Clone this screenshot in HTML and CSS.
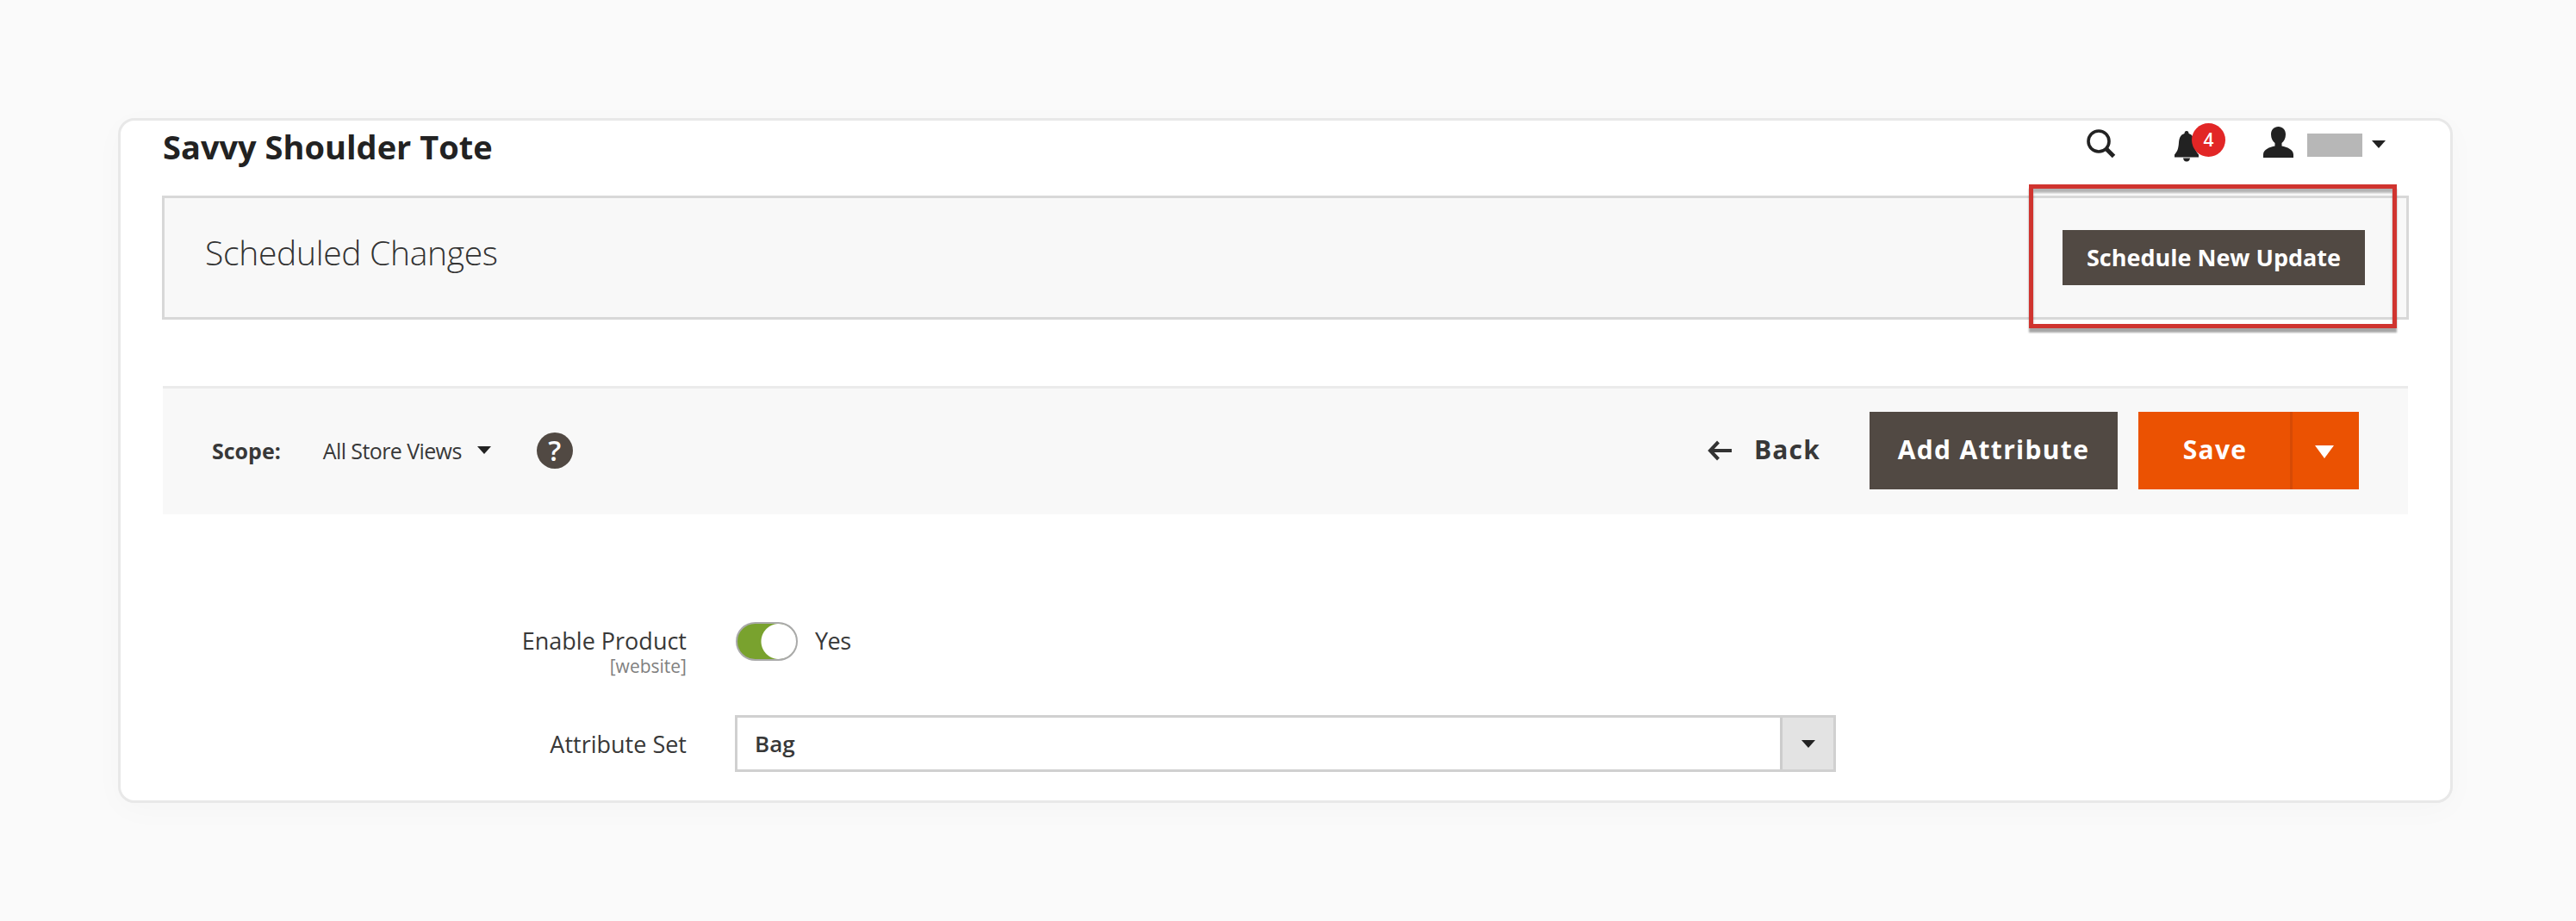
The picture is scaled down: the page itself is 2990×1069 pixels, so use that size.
FILE: index.html
```html
<!DOCTYPE html>
<html lang="en">
<head>
    <meta charset="UTF-8">
    <title>Savvy Shoulder Tote</title>
    <link rel="stylesheet" href="styles.css">
</head>
<body>
    <div class="card">
        <header class="header">
            <h1>Savvy Shoulder Tote</h1>
            <div class="header-tools">
                <svg class="icon-search" viewBox="0 0 34 34">
                    <circle cx="14" cy="14" r="12" fill="none" stroke="#222" stroke-width="3.6"/>
                    <path d="M22.500 22.500 31.500 31.500" fill="none" stroke="#222" stroke-width="5"/>
                </svg>
                <div class="bell">
                    <svg viewBox="0 0 28 36">
                        <path d="M14 0c2 0 2.500 1.500 2.500 3 5 1.500 6 5.500 6.500 10.500.5 7 1.500 10 5 14v3H0v-3c3.500-4 4.500-7 5-14C5.500 8.500 6.500 4.500 11.500 3c0-1.500.5-3 2.500-3z" fill="#222"/>
                        <path d="M10 31.500h8c-.5 2.500-1.500 4-4 4s-3.500-1.500-4-4z" fill="#222"/>
                    </svg>
                    <span class="badge">4</span>
                </div>
                <svg class="icon-user" viewBox="0 0 35 36">
                    <path d="M17.500 0c5 0 8.500 3.500 8.500 9 0 4.500-2 8-4.500 10v3.500c6 1.500 13.500 3.500 13.500 10V36H0v-3.500c0-6.500 7.500-8.500 13.500-10V19C11 17 9 13.500 9 9c0-5.500 3.500-9 8.500-9z" fill="#222"/>
                </svg>
                <span class="user-name"></span>
                <span class="caret"></span>
            </div>
        </header>

        <section class="schedule">
            <h2>Scheduled Changes</h2>
            <button class="btn btn-small">Schedule New Update</button>
            <div class="highlight"></div>
        </section>

        <div class="toolbar">
            <span class="scope-label">Scope:</span>
            <span class="scope-value">All Store Views</span>
            <span class="caret"></span>
            <span class="help">?</span>
            <div class="actions">
                <svg class="icon-back" viewBox="0 0 28 24">
                    <path d="M12.500 2 3 12l9.500 10M3 12h25" fill="none" stroke="#333" stroke-width="4"/>
                </svg>
                <span class="back">Back</span>
                <button class="btn btn-dark">Add Attribute</button>
                <button class="btn btn-save">Save</button>
                <button class="btn btn-toggle"><span class="caret"></span></button>
            </div>
        </div>

        <form class="fields">
            <div class="field">
                <label>Enable Product<small>[website]</small></label>
                <span class="switch"></span>
                <span class="switch-text">Yes</span>
            </div>
            <div class="field">
                <label class="label-select">Attribute Set</label>
                <div class="select">
                    <span>Bag</span>
                    <div class="select-arrow"><span class="caret"></span></div>
                </div>
            </div>
        </form>
    </div>
</body>
</html>
```
FILE: styles.css
```css
* {
    box-sizing: border-box;
}
body {
    margin: 0;
    padding: 137px;
    height: 1069px;
    overflow: hidden;
    background-color: #fafafa;
    color: #383838;
    font-family: "Open Sans", sans-serif;
}
.card {
    width: 2710px;
    height: 795px;
    padding: 0 49px;
    background-color: #fff;
    border: 3px solid #e8e8e8;
    border-radius: 19px;
    box-shadow: 0 8px 36px rgba(0, 0, 0, 0.025);
}
.header {
    height: 87px;
    display: flex;
    justify-content: space-between;
}
h1 {
    margin: 4px 0 0;
    font-size: 38px;
    line-height: 52px;
    color: #222;
}
.header-tools {
    display: flex;
    align-items: flex-start;
    margin-right: 26px;
}
.icon-search {
    width: 34px;
    height: 34px;
    margin-top: 10px;
}
.bell {
    position: relative;
    width: 28px;
    height: 36px;
    margin: 12px 75px 0 68px;
}
.bell svg {
    width: 28px;
    height: 36px;
}
.badge {
    position: absolute;
    left: 20px;
    top: -9px;
    width: 39px;
    height: 39px;
    border-radius: 50%;
    background-color: #e22626;
    color: #fff;
    font-size: 21px;
    font-weight: 600;
    line-height: 38px;
    text-align: center;
}
.icon-user {
    width: 35px;
    height: 36px;
    margin-top: 7px;
}
.user-name {
    width: 64px;
    height: 27px;
    margin: 15px 11px 0 16px;
    background-color: #b7b7b7;
}
.caret {
    border: 8px solid transparent;
    border-top: 9px solid #222;
    border-bottom: 0;
}
.header-tools .caret {
    margin-top: 23px;
}

/* Scheduled changes panel */
.schedule {
    position: relative;
    height: 144px;
    margin: 0 -1px 0 -1px;
    padding: 37px 48px 0;
    display: flex;
    justify-content: space-between;
    align-items: flex-start;
    background-color: #f8f8f8;
    border: 3px solid #d8d8d8;
}
h2 {
    margin: -1px 0 0 -1px;
    font-size: 39px;
    font-weight: 300;
    letter-spacing: -0.3px;
    line-height: 54px;
    color: #333;
}
.highlight {
    position: absolute;
    left: 2164px;
    top: -16px;
    width: 427px;
    height: 167px;
    border: 5px solid #d0342f;
    box-shadow: 0 5px 2px rgba(0, 0, 0, 0.35), inset 0 5px 3px rgba(0, 0, 0, 0.3);
}
.btn {
    padding: 0;
    border: 0;
    background-color: #514943;
    color: #fff;
    font-family: inherit;
    font-size: 30px;
    font-weight: 700;
}
.btn-small {
    width: 351px;
    height: 64px;
    padding-bottom: 2px;
    font-size: 27px;
}

/* Toolbar */
.toolbar {
    height: 149px;
    margin-top: 77px;
    padding: 0 57px 3px;
    display: flex;
    align-items: center;
    background-color: #f8f8f8;
    border-top: 3px solid #ebebeb;
    font-size: 25px;
}
.scope-label {
    font-weight: 700;
}
.scope-value {
    margin: 0 18px 0 49px;
    letter-spacing: -0.6px;
}
.help {
    width: 42px;
    height: 42px;
    margin-left: 53px;
    border-radius: 50%;
    background-color: #514943;
    color: #fff;
    font-size: 33px;
    font-weight: 600;
    line-height: 42px;
    text-align: center;
}
.actions {
    display: flex;
    align-items: center;
    margin-left: auto;
}
.icon-back {
    width: 28px;
    height: 24px;
}
.back {
    margin: -2px 57px 0 26px;
    font-size: 30px;
    font-weight: 700;
    letter-spacing: 1.2px;
}
.actions .btn {
    height: 90px;
    padding-bottom: 2px;
    letter-spacing: 1.3px;
}
.actions .btn-dark {
    width: 288px;
    margin-right: 24px;
}
.actions .btn-save {
    width: 176px;
    padding-left: 2px;
    background-color: #eb5202;
}
.actions .btn-toggle {
    width: 80px;
    padding-right: 3px;
    background-color: #eb5202;
    border-left: 3px solid #d64a05;
}
.btn-toggle .caret {
    display: inline-block;
    border-width: 15px 11px 0;
    border-top-color: #fff;
    vertical-align: middle;
}

/* Form */
.fields {
    padding-top: 116px;
    font-size: 27px;
}
.field {
    display: flex;
    align-items: flex-start;
    height: 117px;
}
.field label {
    width: 608px;
    padding-top: 12px;
    line-height: 38px;
    text-align: right;
}
.field .label-select {
    padding-top: 15px;
}
small {
    display: block;
    font-size: 21px;
    line-height: 20px;
    color: #808080;
}
.switch {
    width: 72px;
    height: 45px;
    margin: 9px 20px 0 57px;
    border: 2px solid #aaa;
    border-radius: 23px;
    background: radial-gradient(circle at 48px 50%, #fff 20px, #79a22e 21px);
}
.switch-text {
    padding-top: 12px;
    line-height: 38px;
    letter-spacing: -0.5px;
}
.select {
    width: 1278px;
    height: 66px;
    margin-left: 56px;
    padding-left: 20px;
    display: flex;
    justify-content: space-between;
    align-items: center;
    border: 3px solid #d0d0d0;
    font-size: 26px;
    font-weight: 600;
}
.select-arrow {
    width: 62px;
    height: 100%;
    display: flex;
    justify-content: center;
    align-items: center;
    background-color: #e3e3e3;
    border-left: 3px solid #ccc;
}
```
